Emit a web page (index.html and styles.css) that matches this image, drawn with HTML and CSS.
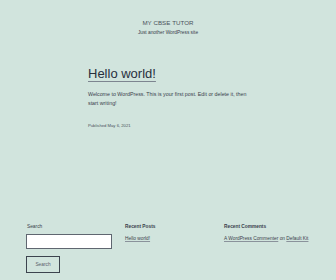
FILE: index.html
```html
<!DOCTYPE html>
<html lang="en">
<head>
<meta charset="utf-8">
<title>MY CBSE TUTOR</title>
<link rel="stylesheet" href="styles.css">
</head>
<body>
<header class="site-header">
  <p class="site-title">MY CBSE TUTOR</p>
  <p class="site-desc">Just another WordPress site</p>
</header>
<main class="content">
  <h1 class="entry-title"><a href="#">Hello world!</a></h1>
  <p class="entry-text">Welcome to WordPress. This is your first post. Edit or delete it, then start writing!</p>
  <p class="entry-meta">Published May 6, 2021</p>
</main>
<footer class="widgets">
  <div class="widget">
    <label class="search-label" for="s">Search</label>
    <input class="search-input" id="s" type="text">
    <button class="search-btn" type="button">Search</button>
  </div>
  <div class="widget">
    <h2 class="widget-title">Recent Posts</h2>
    <a class="widget-link" href="#">Hello world!</a>
  </div>
  <div class="widget">
    <h2 class="widget-title">Recent Comments</h2>
    <p class="widget-text"><a class="widget-link" href="#">A WordPress Commenter</a> on <a class="widget-link" href="#">Default Kit</a></p>
  </div>
</footer>
</body>
</html>
```
FILE: styles.css
```css
html, body {
  margin: 0;
  padding: 0;
  height: 280px;
  overflow: hidden;
}
body {
  background: #d1e4dd;
  color: #39414c;
  font-family: "Liberation Sans", Arial, sans-serif;
}
p, h1, h2 { margin: 0; }
a { color: inherit; }

.site-header {
  padding-top: 19px;
  text-align: center;
}
.site-title {
  font-size: 6.2px;
  line-height: 8px;
  letter-spacing: 0.05px;
  color: #4a525c;
}
.site-desc {
  margin-top: 2.7px;
  font-size: 4.8px;
  line-height: 6px;
}

.content {
  margin: 30.8px 0 0 88px;
  width: 168px;
}
.entry-title {
  font-size: 13px;
  line-height: 16px;
  font-weight: normal;
  color: #28303d;
}
.entry-title a {
  text-decoration: underline;
  text-decoration-thickness: 0.6px;
  text-underline-offset: 2.5px;
  text-decoration-color: #7d8590;
}
.entry-text {
  margin-top: 7.2px;
  font-size: 5.3px;
  line-height: 9px;
}
.entry-meta {
  margin-top: 15.3px;
  font-size: 4.2px;
  line-height: 6px;
  color: #4a525c;
}

.widgets {
  margin: 95px 0 0 26px;
  display: grid;
  grid-template-columns: 86px 86px auto;
  column-gap: 13px;
  font-size: 4.8px;
  line-height: 6px;
}
.widget {
  display: flex;
  flex-direction: column;
  align-items: flex-start;
}
.search-label {
  padding-left: 1px;
}
.search-input {
  box-sizing: border-box;
  margin: 4px 0 0;
  width: 86px;
  height: 15px;
  border: 1px solid #5f6670;
  background: #fff;
  padding: 0;
}
.search-btn {
  box-sizing: border-box;
  margin-top: 7px;
  width: 34px;
  height: 17px;
  border: 1.6px solid #3c434e;
  background: transparent;
  color: #5a616b;
  font-family: "Liberation Sans", Arial, sans-serif;
  font-size: 4.8px;
  padding: 0;
}
.widget-title {
  font-size: 4.8px;
  line-height: 6px;
  font-weight: bold;
}
.widget-link {
  margin-top: 6.5px;
  text-decoration: underline;
  text-decoration-thickness: 0.4px;
  text-underline-offset: 1px;
  text-decoration-color: #8a929b;
}
.widget-text {
  margin-top: 6.5px;
}
.widget-text .widget-link {
  margin-top: 0;
}
```
